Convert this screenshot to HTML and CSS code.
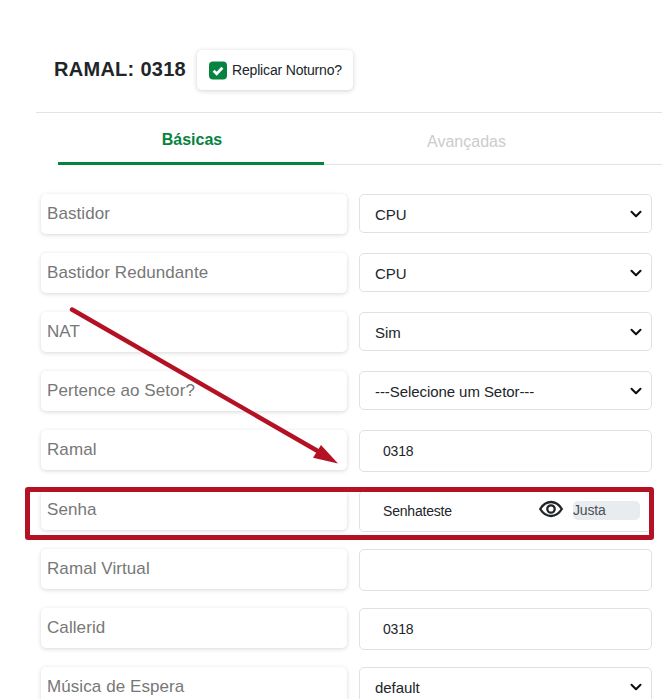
FILE: index.html
```html
<!DOCTYPE html>
<html lang="pt">
<head>
<meta charset="utf-8">
<title>Ramal 0318</title>
<link rel="stylesheet" href="styles.css">
</head>
<body>
<main class="page">
  <header class="head">
    <h1 class="title">RAMAL: 0318</h1>
    <label class="replicate">
      <svg class="check" viewBox="0 0 18 18" aria-hidden="true"><rect width="18" height="18" rx="4" fill="#06843f"/><path d="M4.600 9.200 7.700 12.200 13.400 6.300" fill="none" stroke="#fff" stroke-width="2.800"/></svg>
      <span>Replicar Noturno?</span>
    </label>
  </header>
  <nav class="tabs">
    <a class="tab tab-active">Básicas</a>
    <a class="tab tab-muted">Avançadas</a>
  </nav>
  <form class="rows">
    <div class="row"><div class="label">Bastidor</div><select class="control select"><option>CPU</option></select></div>
    <div class="row"><div class="label">Bastidor Redundante</div><select class="control select"><option>CPU</option></select></div>
    <div class="row"><div class="label">NAT</div><select class="control select"><option>Sim</option></select></div>
    <div class="row"><div class="label">Pertence ao Setor?</div><select class="control select"><option>---Selecione um Setor---</option></select></div>
    <div class="row"><div class="label">Ramal</div><input class="control text" value="0318"></div>
    <div class="row">
      <div class="label">Senha</div>
      <div class="password">
        <input class="control text" value="Senhateste">
        <svg class="eye" viewBox="0 0 24 18" aria-hidden="true"><path d="M1.200 9C4 4.400 7.800 2 12 2s8 2.400 10.800 7C20 13.600 16.200 16 12 16S4 13.600 1.200 9Z" fill="none" stroke="#212529" stroke-width="2.300"/><circle cx="12" cy="9" r="3.700" fill="none" stroke="#212529" stroke-width="2.300"/></svg>
        <span class="strength">Justa</span>
      </div>
    </div>
    <div class="row"><div class="label">Ramal Virtual</div><input class="control text" value=""></div>
    <div class="row"><div class="label">Callerid</div><input class="control text" value="0318"></div>
    <div class="row"><div class="label">Música de Espera</div><select class="control select"><option>default</option></select></div>
  </form>
</main>
<div class="highlight"></div>
<svg class="arrow" viewBox="0 0 662 699" aria-hidden="true">
  <path d="M72 309.500 322 453.500" fill="none" stroke="#b41224" stroke-width="4.500" stroke-linecap="round"/>
  <path d="M338 463.500 313 457.700 321 445Z" fill="#b41224"/>
</svg>
</body>
</html>
```
FILE: styles.css
```css
* { box-sizing: border-box; }
html, body { margin: 0; height: 699px; overflow: hidden; background: #fff; }
body { font-family: "Liberation Sans", Arial, sans-serif; color: #212529; position: relative; }
.page { padding-left: 36px; }
.head { display: flex; align-items: flex-start; gap: 11px; height: 113px; padding: 50px 0 0 18px; border-bottom: 1px solid #e2e2e8; }
.title { margin: 7px 0 0; font-size: 20px; line-height: 24px; font-weight: 700; letter-spacing: .28px; color: #212529; }
.replicate { display: flex; align-items: center; gap: 5px; width: 156px; height: 40px; padding: 1px 0 0 12px; background: #fff; border-radius: 5px; box-shadow: 0 1px 5px rgba(0,0,0,.18); font-size: 14px; letter-spacing: -.17px; line-height: 16px; }
.replicate span { position: relative; top: -1px; }
.check { width: 18px; height: 19px; flex: none; }
.tabs { display: flex; height: 52px; margin-left: 22px; border-bottom: 1px solid #e2e2e8; }
.tab { display: block; font-size: 16px; text-align: center; }
.tab-active { width: 266px; height: 52px; padding: 18px 0 0 2px; font-weight: 700; color: #06843f; border-bottom: 3px solid #06843f; }
.tab-muted { width: 285px; padding-top: 20px; color: #ccc; }
.rows { display: block; padding: 28.600px 0 0 5px; }
.row { display: flex; align-items: flex-start; gap: 12px; height: 59.200px; }
.label { width: 306px; height: 40px; padding: 0 6px; background: #fff; border-radius: 5px; box-shadow: 0 1px 4px rgba(0,0,0,.16); font-size: 17px; line-height: 39px; letter-spacing: .08px; color: #777; }
.control { display: block; width: 293px; border: 1px solid #dee2e6; border-radius: 5px; background-color: #fff; font-family: inherit; font-size: 14px; color: #212529; outline: 0; }
.select { height: 39px; padding: 2px 30px 0 15px; font-size: 15px; letter-spacing: -.07px; appearance: none; -webkit-appearance: none; background-image: url("data:image/svg+xml,%3Csvg xmlns='http://www.w3.org/2000/svg' viewBox='0 0 16 16'%3E%3Cpath fill='none' stroke='%23111' stroke-linecap='round' stroke-linejoin='round' stroke-width='2.800' d='m2 5 6 6 6-6'/%3E%3C/svg%3E"); background-repeat: no-repeat; background-position: right 7px top 13px; background-size: 16px 12px; }
.text { height: 42px; padding: 0 23px; letter-spacing: -.2px; }
.password { position: relative; width: 293px; height: 42px; }
.eye { position: absolute; left: 180px; top: 10.500px; width: 24px; height: 18px; }
.strength { position: absolute; left: 214px; top: 11px; width: 67px; height: 19px; border-radius: 5px; background: #e9ecef; font-size: 14px; line-height: 19px; letter-spacing: -.2px; color: #495057; }
.highlight { position: absolute; left: 25px; top: 487px; width: 629px; height: 53px; border: 5px solid #b41224; border-radius: 3px; }
.arrow { position: absolute; left: 0; top: 0; width: 662px; height: 699px; pointer-events: none; }
```
